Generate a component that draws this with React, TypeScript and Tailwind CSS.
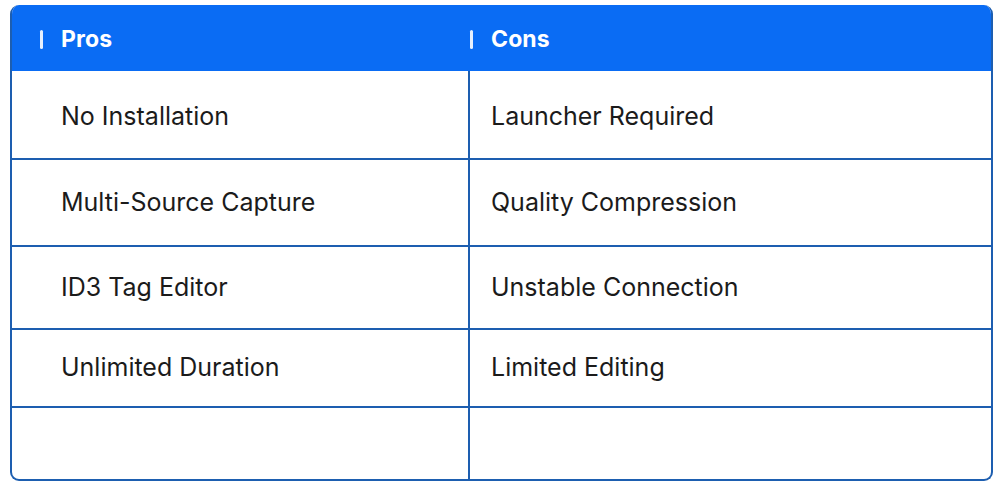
const rows = [
  ['No Installation', 'Launcher Required', 'h-[87px]', 'pt-[5px]'],
  ['Multi-Source Capture', 'Quality Compression', 'h-[87px]', 'pt-[1px]'],
  ['ID3 Tag Editor', 'Unstable Connection', 'h-[83px]', 'pt-0'],
  ['Unlimited Duration', 'Limited Editing', 'h-[78px]', 'pt-0'],
  ['', '', 'flex-1', 'pt-0'],
];

function HeaderCell({ label, first }: { label: string; first?: boolean }) {
  return (
    <div className={`flex items-center gap-[18px] pt-[3px] ${first ? 'pl-[28px]' : 'pl-0'}`}>
      <span className="h-[19px] w-[3px] rounded-full bg-white/90" />
      <span className="text-[23px] font-bold tracking-[0.005em] text-white">{label}</span>
    </div>
  );
}

export default function App() {
  return (
    <div className="h-[491px] w-[1000px] bg-white pl-[10px] pt-[5px] font-['Inter','Noto_Sans',sans-serif]">
      <div className="flex h-[476px] w-[983px] flex-col overflow-hidden rounded-[9px] border-2 border-t-0 border-[#1d5eb0] bg-white">
        <div className="grid h-[66px] shrink-0 grid-cols-[458px_1fr] bg-[#0a6cf4]">
          <HeaderCell label="Pros" first />
          <HeaderCell label="Cons" />
        </div>
        {rows.map(([pro, con, height, offset], index) => (
          <div
            className={`grid shrink-0 grid-cols-[458px_1fr] ${height} ${index > 0 ? 'border-t-2 border-[#1d5eb0]' : ''}`}
            key={index}
          >
            <div
              className={`flex items-center border-r-2 border-[#1d5eb0] pl-[49px] text-[25px] text-[#1b1b1b] ${offset}`}
            >
              {pro}
            </div>
            <div className={`flex items-center pl-[21px] text-[25px] text-[#1b1b1b] ${offset}`}>{con}</div>
          </div>
        ))}
      </div>
    </div>
  );
}
